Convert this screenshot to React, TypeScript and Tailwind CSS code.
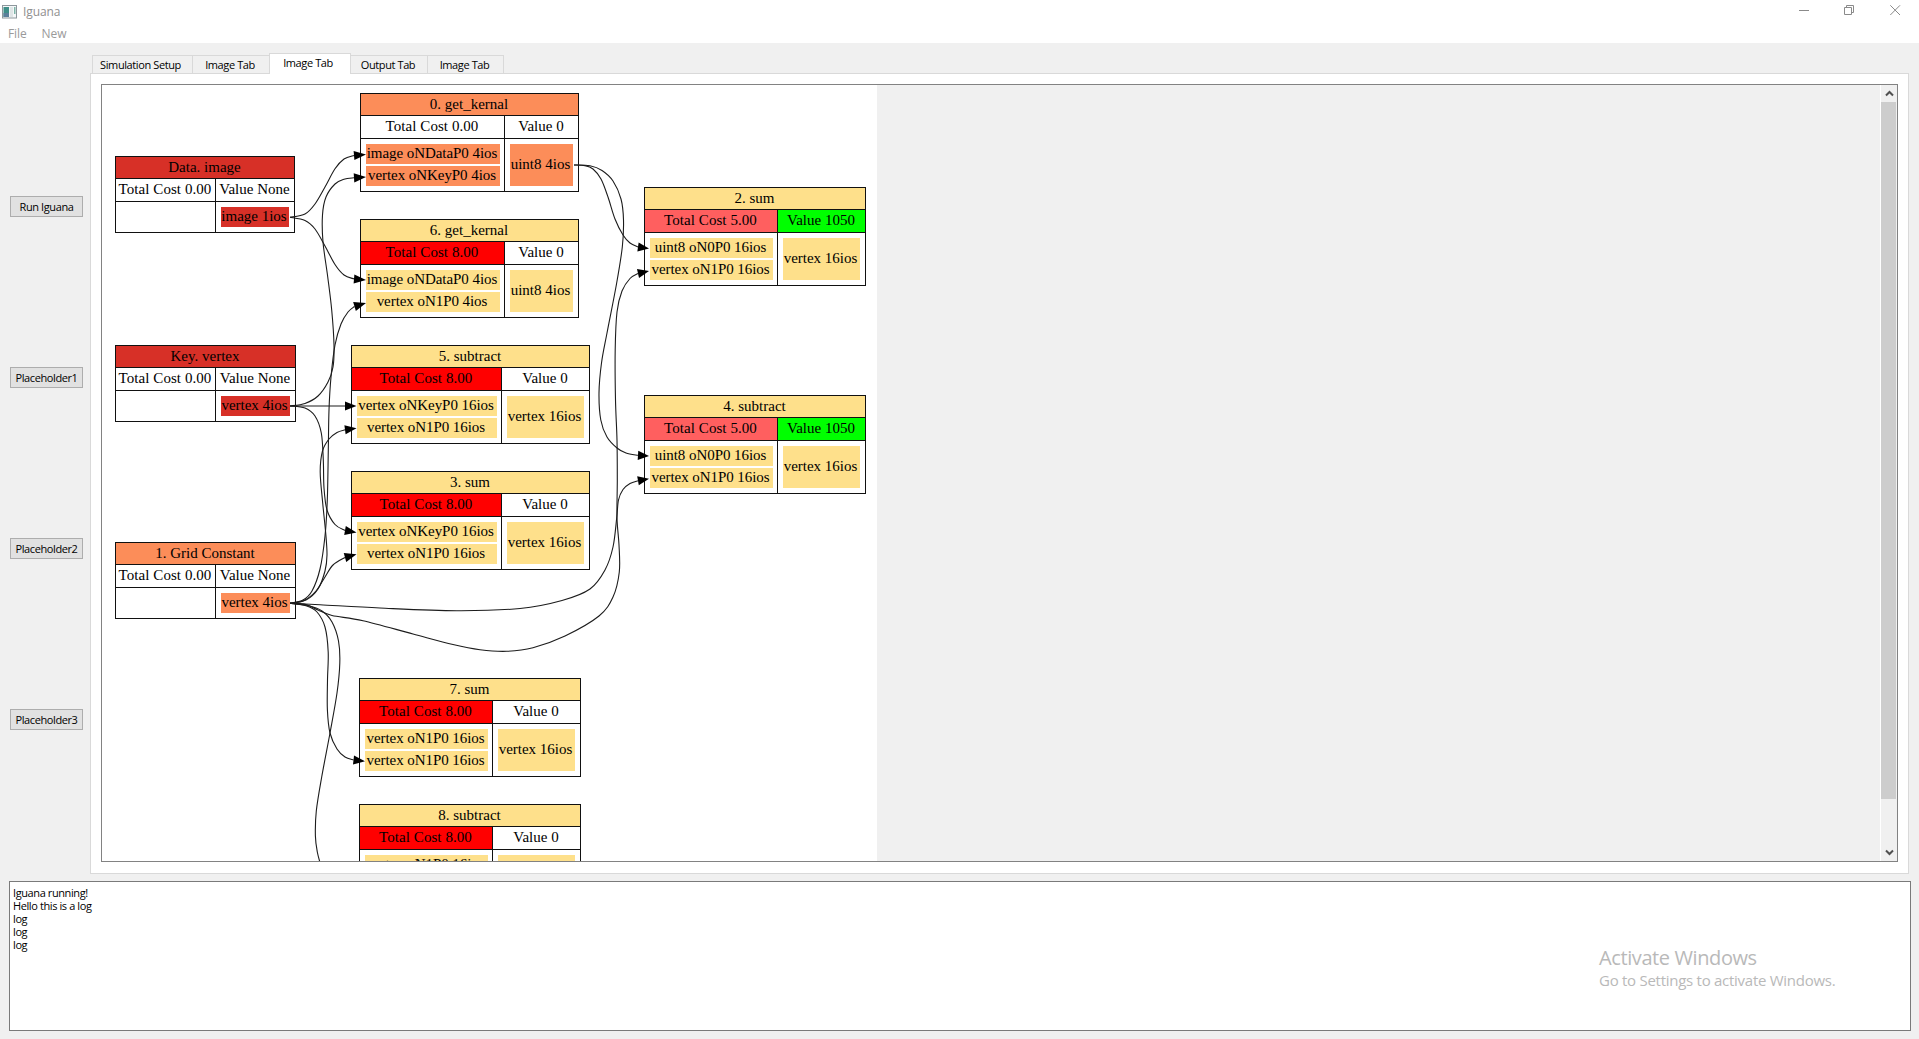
import React from "react";

type Point = [number, number];

const RED = "bg-[#d73027]";
const ORANGE = "bg-[#fc8d59]";
const YELLOW = "bg-[#fee08b]";

interface GraphNode {
  box: string;
  title: string;
  tone: string;
  cols: string;
  cost: string;
  costTone: string;
  value: string;
  valueTone: string;
  inputs: string[];
  output: string;
}

const nodes: GraphNode[] = [
  { box: "left-[13px] top-[71px] w-[180px]", title: "Data. image", tone: RED, cols: "grid-cols-[99px_1fr]", cost: "Total Cost 0.00", costTone: "", value: "Value None", valueTone: "", inputs: [], output: "image 1ios" },
  { box: "left-[13px] top-[260px] w-[181px]", title: "Key. vertex", tone: RED, cols: "grid-cols-[99px_1fr]", cost: "Total Cost 0.00", costTone: "", value: "Value None", valueTone: "", inputs: [], output: "vertex 4ios" },
  { box: "left-[13px] top-[457px] w-[181px]", title: "1. Grid Constant", tone: ORANGE, cols: "grid-cols-[99px_1fr]", cost: "Total Cost 0.00", costTone: "", value: "Value None", valueTone: "", inputs: [], output: "vertex 4ios" },
  { box: "left-[258px] top-[8px] w-[219px]", title: "0. get_kernal", tone: ORANGE, cols: "grid-cols-[143px_1fr]", cost: "Total Cost 0.00", costTone: "", value: "Value 0", valueTone: "", inputs: ["image oNDataP0 4ios", "vertex oNKeyP0 4ios"], output: "uint8 4ios" },
  { box: "left-[258px] top-[134px] w-[219px]", title: "6. get_kernal", tone: YELLOW, cols: "grid-cols-[143px_1fr]", cost: "Total Cost 8.00", costTone: "bg-[#ff0000]", value: "Value 0", valueTone: "", inputs: ["image oNDataP0 4ios", "vertex oN1P0 4ios"], output: "uint8 4ios" },
  { box: "left-[249px] top-[260px] w-[239px]", title: "5. subtract", tone: YELLOW, cols: "grid-cols-[149px_1fr]", cost: "Total Cost 8.00", costTone: "bg-[#ff0000]", value: "Value 0", valueTone: "", inputs: ["vertex oNKeyP0 16ios", "vertex oN1P0 16ios"], output: "vertex 16ios" },
  { box: "left-[249px] top-[386px] w-[239px]", title: "3. sum", tone: YELLOW, cols: "grid-cols-[149px_1fr]", cost: "Total Cost 8.00", costTone: "bg-[#ff0000]", value: "Value 0", valueTone: "", inputs: ["vertex oNKeyP0 16ios", "vertex oN1P0 16ios"], output: "vertex 16ios" },
  { box: "left-[542px] top-[102px] w-[222px]", title: "2. sum", tone: YELLOW, cols: "grid-cols-[132px_1fr]", cost: "Total Cost 5.00", costTone: "bg-[#ff5f5f]", value: "Value 1050", valueTone: "bg-[#00ff00]", inputs: ["uint8 oN0P0 16ios", "vertex oN1P0 16ios"], output: "vertex 16ios" },
  { box: "left-[542px] top-[310px] w-[222px]", title: "4. subtract", tone: YELLOW, cols: "grid-cols-[132px_1fr]", cost: "Total Cost 5.00", costTone: "bg-[#ff5f5f]", value: "Value 1050", valueTone: "bg-[#00ff00]", inputs: ["uint8 oN0P0 16ios", "vertex oN1P0 16ios"], output: "vertex 16ios" },
  { box: "left-[257px] top-[593px] w-[222px]", title: "7. sum", tone: YELLOW, cols: "grid-cols-[132px_1fr]", cost: "Total Cost 8.00", costTone: "bg-[#ff0000]", value: "Value 0", valueTone: "", inputs: ["vertex oN1P0 16ios", "vertex oN1P0 16ios"], output: "vertex 16ios" },
  { box: "left-[257px] top-[719px] w-[222px]", title: "8. subtract", tone: YELLOW, cols: "grid-cols-[132px_1fr]", cost: "Total Cost 8.00", costTone: "bg-[#ff0000]", value: "Value 0", valueTone: "", inputs: ["vertex oN1P0 16ios", "vertex oN1P0 16ios"], output: "vertex 16ios" },
];

// Each edge lists the points its curve passes through and the tip of its arrowhead.
const edges: { pts: Point[]; tip?: Point }[] = [
  { pts: [[290, 217.3], [305, 214], [315, 204], [325, 187], [335, 168.8], [344, 159], [354, 155.5]], tip: [366, 154.5] },
  { pts: [[290, 217.3], [305, 220.5], [315, 229], [325, 246], [335, 264.5], [344, 275], [354, 279]], tip: [366, 280] },
  { pts: [[290, 406], [305, 403.5], [318, 396], [328, 382], [333, 367], [334, 345], [331.7, 310], [327.7, 276.7], [323, 242], [322.5, 215], [326, 197], [335, 184], [344, 179.3], [354, 177.8]], tip: [366, 177] },
  { pts: [[290, 406], [345, 406]], tip: [356.5, 406] },
  { pts: [[290, 406], [305, 408], [315, 416], [321.3, 433], [323.3, 460], [324, 488], [327, 510], [335, 524.5], [345, 530.5]], tip: [356.5, 532.5] },
  { pts: [[290, 603.3], [303, 600], [312, 591], [320, 569], [325, 536], [327.3, 500], [328.3, 450], [329, 410], [331, 377], [335, 345], [341, 324], [348, 312], [354.5, 306.5]], tip: [366, 303] },
  { pts: [[290, 603.3], [306, 600], [318, 589], [325, 571], [327, 555], [325.7, 533], [322.7, 503], [320.2, 472], [322.5, 451], [329, 439], [337, 432.5], [345, 429.8]], tip: [356.5, 428.3] },
  { pts: [[290, 603.3], [304, 600.5], [316, 591], [325, 577], [333, 565], [345, 557.5]], tip: [356.5, 554.3] },
  { pts: [[290, 603.3], [320, 604.7], [380, 608], [456.7, 610.7], [520, 608.5], [562, 600.5], [590, 589], [605, 570], [613, 547], [616.7, 518], [618.5, 500], [623, 489.5], [630, 483.5], [638, 480.7]], tip: [649, 478.7] },
  { pts: [[290, 603.3], [306, 604.5], [318, 610], [332, 615.5], [363, 620.7], [413, 634], [453, 644.5], [480, 649.7], [506.7, 651.3], [533, 647.7], [565, 636], [599, 616], [613, 597], [619.3, 572], [619, 545], [617, 518], [617.3, 480], [617, 440], [615.5, 400], [615.2, 350], [617, 312], [622, 291], [630, 278.5], [638, 273.5]], tip: [649, 271] },
  { pts: [[290, 603.3], [306, 605.7], [317, 612], [325, 627], [328.2, 652], [327.5, 680], [327.4, 710], [330, 733], [337, 749], [345, 757], [353.5, 760]], tip: [365, 761.3] },
  { pts: [[290, 603.3], [308, 605.5], [322, 611], [332, 622], [338.5, 641], [339.8, 663], [337, 693], [330, 733], [321.7, 777], [316.3, 811], [315.4, 836], [317.3, 852], [321, 866]] },
  { pts: [[574, 165], [585, 165.6], [593, 169], [601, 179], [608, 197], [615, 219], [623, 235], [630, 243], [638, 247]], tip: [649, 248.5] },
  { pts: [[574, 165], [590, 165.8], [602, 170.5], [613, 181], [621, 199], [623.5, 220], [622.3, 247], [616.5, 284], [607, 333], [601.5, 363], [599, 393], [600.8, 420], [607, 437], [617, 448], [626, 453], [638, 455.3]], tip: [649, 456] },
];

// Catmull-Rom spline through the points, written as cubic Béziers.
function spline(p: Point[]) {
  let d = `M${p[0][0]},${p[0][1]}`;
  for (let i = 0; i < p.length - 1; i++) {
    const a = p[i - 1] ?? p[i];
    const b = p[i];
    const c = p[i + 1];
    const e = p[i + 2] ?? c;
    d += ` C${b[0] + (c[0] - a[0]) / 6},${b[1] + (c[1] - a[1]) / 6} ${c[0] - (e[0] - b[0]) / 6},${c[1] - (e[1] - b[1]) / 6} ${c[0]},${c[1]}`;
  }
  return d;
}

function arrowHead([bx, by]: Point, [tx, ty]: Point) {
  const len = Math.hypot(tx - bx, ty - by);
  const nx = (-(ty - by) / len) * 4.6;
  const ny = ((tx - bx) / len) * 4.6;
  return `${tx},${ty} ${bx + nx},${by + ny} ${bx - nx},${by - ny}`;
}

function Edges() {
  return (
    <svg className="absolute inset-0" width="775" height="776" viewBox="102 85 775 776" fill="none">
      {edges.map((e, i) => (
        <g key={i}>
          <path d={spline(e.pts)} stroke="#1c1c1c" strokeWidth="1.1" />
          {e.tip && <polygon points={arrowHead(e.pts[e.pts.length - 1], e.tip)} fill="#000" />}
        </g>
      ))}
    </svg>
  );
}

function Cell({ text, className }: { text: string; className: string }) {
  return <div className={`flex items-center justify-center whitespace-nowrap ${className}`}>{text}</div>;
}

function NodeCard({ n }: { n: GraphNode }) {
  return (
    <div className={`absolute flex flex-col gap-px border border-[#111] bg-[#111] ${n.box}`}>
      <Cell text={n.title} className={`h-[21px] pr-px ${n.tone}`} />
      <div className={`grid h-[22px] gap-px ${n.cols}`}>
        <Cell text={n.cost} className={`pr-px pb-0.5 tracking-[0.06px] ${n.costTone || "bg-white"}`} />
        <Cell text={n.value} className={`pr-px pb-0.5 ${n.valueTone || "bg-white"}`} />
      </div>
      <div className={`grid gap-px ${n.cols}`}>
        <div className="flex flex-col gap-0.5 bg-white p-[5px] pr-1">
          {n.inputs.map((t, i) => (
            <Cell key={i} text={t} className={`h-5 pr-0.5 pb-0.5 tracking-[-0.06px] ${n.tone}`} />
          ))}
        </div>
        <div className="flex bg-white p-[5px]">
          <Cell text={n.output} className={`min-h-5 flex-1 pr-0.5 pb-0.5 ${n.tone}`} />
        </div>
      </div>
    </div>
  );
}

function Chevron({ down }: { down?: boolean }) {
  return (
    <svg width="9" height="7" viewBox="0 0 9 7" fill="none" stroke="#505050" strokeWidth="2">
      <path d={down ? "M1 1.5 4.5 5 8 1.5" : "M1 5.5 4.5 2 8 5.5"} />
    </svg>
  );
}

function Tab({ label, className }: { label: string; className: string }) {
  return (
    <div className={`flex h-[18px] items-center justify-center border border-b-0 border-l-0 border-[#d9d9d9] whitespace-nowrap ${className}`}>
      {label}
    </div>
  );
}

export default function App() {
  return (
    <div className="flex h-[1039px] w-[1919px] flex-col overflow-hidden bg-[#f0f0f0] font-['Open_Sans','Noto_Sans',sans-serif] text-[11px] tracking-[-0.4px] text-black">
      <header className="h-[43px] bg-white text-[12px] tracking-[-0.1px] text-[#8f8f8f]">
        <div className="flex h-[23px] items-start justify-between pl-[2px]">
          <div className="flex items-center">
            <svg width="15" height="14" viewBox="0 0 15 14" className="mt-1">
              <rect x="0.5" y="0.5" width="14" height="12.5" fill="#f4f7f8" stroke="#8d979c" />
              <rect x="1.5" y="2" width="5.5" height="10" fill="#3f8f88" />
              <rect x="1.5" y="8" width="5.5" height="4" fill="#5b7f9a" />
              <rect x="8" y="2" width="3" height="10" fill="#dfe5e6" />
              <rect x="12" y="2" width="1.5" height="7" fill="#7fb5a8" />
            </svg>
            <span className="mt-1 ml-[6px] leading-4">Iguana</span>
          </div>
          <svg width="132" height="20" viewBox="1787 0 132 20" fill="none" stroke="#8a8a8a">
            <path d="M1799 10.5h10" />
            <path d="M1844.5 7.5h7v7h-7zM1846.5 7.5v-2h7v7h-2" />
            <path d="M1890.3 5.3l9.7 9.7M1900 5.3l-9.7 9.7" />
          </svg>
        </div>
        <nav className="flex gap-[15px] pl-2 text-[#9a9a9a]">
          <span className="leading-[22px]">File</span>
          <span className="leading-[22px]">New</span>
        </nav>
      </header>

      <main className="flex h-[838px]">
        <aside className="flex w-[90px] flex-col gap-[150px] pt-[153px] pl-[10px]">
          {["Run Iguana", "Placeholder1", "Placeholder2", "Placeholder3"].map((t) => (
            <button key={t} className="flex h-[21px] w-[73px] items-center justify-center border border-[#adadad] bg-[#e1e1e1] pt-0.5 whitespace-nowrap">
              {t}
            </button>
          ))}
        </aside>

        <section className="flex flex-col pt-[10px]">
          <div className="flex h-5 items-end pl-[2px]">
            <Tab label="Simulation Setup" className="w-[101px] border-l! bg-[#f0f0f0] pt-0.5 pr-1" />
            <Tab label="Image Tab" className="w-[76px] border-r-0 bg-[#f0f0f0] pt-0.5 pr-0.5" />
            <Tab label="Image Tab" className="z-10 -mb-px h-[21px]! w-[82px] border-l! bg-white pr-1 pb-0.5" />
            <Tab label="Output Tab" className="w-[77px] bg-[#f0f0f0] pt-0.5 pr-0.5" />
            <Tab label="Image Tab" className="w-[76px] bg-[#f0f0f0] pt-0.5 pr-0.5" />
          </div>
          <div className="h-[801px] w-[1819px] border border-[#d9d9d9] bg-white pt-[10px] pl-[10px]">
            <div className="flex h-[778px] w-[1797px] border border-[#828282] bg-[#f0f0f0]">
              <div className="relative w-[775px] overflow-hidden bg-white font-['Liberation_Serif',serif] text-[15px] leading-none tracking-normal">
                {nodes.map((n) => (
                  <NodeCard key={n.title} n={n} />
                ))}
                <Edges />
              </div>
              <div className="ml-auto flex w-[17px] flex-col items-center border-l border-white">
                <div className="flex h-[17px] items-center">
                  <Chevron />
                </div>
                <div className="h-[697px] w-[15px] self-start bg-[#cdcdcd]" />
                <div className="mt-auto flex h-[17px] items-center">
                  <Chevron down />
                </div>
              </div>
            </div>
          </div>
        </section>
      </main>

      <section className="relative ml-[9px] h-[150px] w-[1902px] border border-[#7a7a7a] bg-white pt-1 pl-[3px] leading-[13px]">
        {["Iguana running!", "Hello this is a log", "log", "log", "log"].map((t, i) => (
          <p key={i}>{t}</p>
        ))}
        <div className="absolute top-[62px] left-[1589px] whitespace-nowrap text-[#b9b9b9]">
          <p className="text-[20px] leading-[28px]">Activate Windows</p>
          <p className="text-[15px] leading-[17px] tracking-[-0.27px]">Go to Settings to activate Windows.</p>
        </div>
      </section>
    </div>
  );
}
